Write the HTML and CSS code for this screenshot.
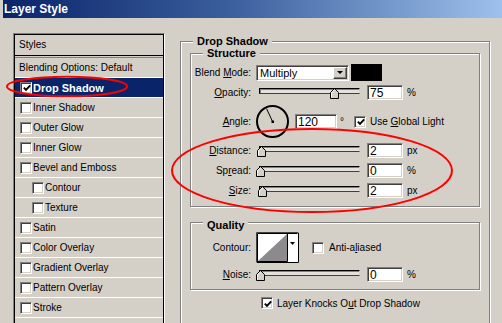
FILE: index.html
```html
<!DOCTYPE html>
<html lang="en">
<head>
    <meta charset="UTF-8">
    <title>Layer Style</title>
    <link rel="stylesheet" href="styles.css">
</head>
<body>
    <div class="titlebar">Layer Style</div>

    <div class="dialog">
        <!-- left column: list of effects -->
        <div class="styles-panel">
            <div class="styles-list">
                <div class="styles-head">Styles</div>
                <ul class="effects">
                    <li class="effect plain">Blending Options: Default</li>
                    <li class="effect selected">
                        <span class="check"><svg width="8" height="8" viewBox="0 0 8 8"><path d="M0.8 3.6 L3 5.8 L7.2 1.4" /></svg></span>Drop Shadow
                    </li>
                    <li class="effect"><span class="check"></span>Inner Shadow</li>
                    <li class="effect"><span class="check"></span>Outer Glow</li>
                    <li class="effect"><span class="check"></span>Inner Glow</li>
                    <li class="effect"><span class="check"></span>Bevel and Emboss</li>
                    <li class="effect sub"><span class="check"></span>Contour</li>
                    <li class="effect sub"><span class="check"></span>Texture</li>
                    <li class="effect"><span class="check"></span>Satin</li>
                    <li class="effect"><span class="check"></span>Color Overlay</li>
                    <li class="effect"><span class="check"></span>Gradient Overlay</li>
                    <li class="effect"><span class="check"></span>Pattern Overlay</li>
                    <li class="effect"><span class="check"></span>Stroke</li>
                </ul>
            </div>
        </div>

        <!-- right column: drop shadow settings -->
        <div class="settings">
            <div class="group main-group">
                <div class="group-title">Drop Shadow</div>

                <div class="group inner-group structure">
                    <div class="group-title">Structure</div>

                    <div class="field-row blend-row">
                        <span class="row-label">Blend <u>M</u>ode:</span>
                        <div class="select">
                            <span class="select-text">Multiply</span>
                            <span class="select-btn"><span class="arrow"></span></span>
                        </div>
                        <span class="swatch"></span>
                    </div>

                    <div class="field-row slider-row opacity-row">
                        <span class="row-label"><u>O</u>pacity:</span>
                        <div class="slider">
                            <div class="track"></div>
                            <svg class="thumb" style="left: 71px" width="9" height="11" viewBox="0 0 9 11"><path class="thumb-body" d="M0.5 10.5 L0.5 4.5 L4.5 0.5 L8.5 4.5 L8.5 10.5 Z" /><path class="thumb-light" d="M1.5 9.5 L1.5 4.9 L4.5 1.9" /></svg>
                        </div>
                        <span class="field">75</span>
                        <span class="unit">%</span>
                    </div>

                    <div class="field-row angle-row">
                        <span class="row-label"><u>A</u>ngle:</span>
                        <svg class="dial" width="33" height="33" viewBox="0 0 33 33">
                            <circle cx="16.5" cy="16.5" r="15.5" />
                            <line x1="16.5" y1="16.5" x2="10.5" y2="3.5" />
                            <rect x="15.5" y="15.5" width="2.5" height="2.5" />
                        </svg>
                        <span class="field wide">120</span>
                        <span class="degree">°</span>
                        <span class="check"><svg width="8" height="8" viewBox="0 0 8 8"><path d="M0.8 3.6 L3 5.8 L7.2 1.4" /></svg></span>
                        <span class="check-label">Use <u>G</u>lobal Light</span>
                    </div>

                    <div class="field-row slider-row">
                        <span class="row-label"><u>D</u>istance:</span>
                        <div class="slider">
                            <div class="track"></div>
                            <svg class="thumb" style="left: -2px" width="9" height="11" viewBox="0 0 9 11"><path class="thumb-body" d="M0.5 10.5 L0.5 4.5 L4.5 0.5 L8.5 4.5 L8.5 10.5 Z" /><path class="thumb-light" d="M1.5 9.5 L1.5 4.9 L4.5 1.9" /></svg>
                        </div>
                        <span class="field">2</span>
                        <span class="unit">px</span>
                    </div>

                    <div class="field-row slider-row">
                        <span class="row-label">Sp<u>r</u>ead:</span>
                        <div class="slider">
                            <div class="track"></div>
                            <svg class="thumb" style="left: -3px" width="9" height="11" viewBox="0 0 9 11"><path class="thumb-body" d="M0.5 10.5 L0.5 4.5 L4.5 0.5 L8.5 4.5 L8.5 10.5 Z" /><path class="thumb-light" d="M1.5 9.5 L1.5 4.9 L4.5 1.9" /></svg>
                        </div>
                        <span class="field">0</span>
                        <span class="unit">%</span>
                    </div>

                    <div class="field-row slider-row">
                        <span class="row-label"><u>S</u>ize:</span>
                        <div class="slider">
                            <div class="track"></div>
                            <svg class="thumb" style="left: -1px" width="9" height="11" viewBox="0 0 9 11"><path class="thumb-body" d="M0.5 10.5 L0.5 4.5 L4.5 0.5 L8.5 4.5 L8.5 10.5 Z" /><path class="thumb-light" d="M1.5 9.5 L1.5 4.9 L4.5 1.9" /></svg>
                        </div>
                        <span class="field">2</span>
                        <span class="unit">px</span>
                    </div>
                </div>

                <div class="group inner-group quality">
                    <div class="group-title">Quality</div>

                    <div class="field-row contour-row">
                        <span class="row-label">Contour:</span>
                        <svg class="contour" width="43" height="31" viewBox="0 0 43 31">
                            <rect x="0" y="0" width="43" height="31" fill="#fff" />
                            <polygon points="2,29 31,2 31,29" fill="#8c8a8c" />
                            <path d="M0.5 30.5 L0.5 0.5 L42.5 0.5" stroke="#404040" fill="none" />
                            <path d="M1.5 29.5 L1.5 1.5 L41.5 1.5" stroke="#000" fill="none" />
                            <path d="M1 29.5 L31.5 29.5 L31.5 2" stroke="#000" fill="none" />
                            <path d="M42.5 1 L42.5 30.5 L1 30.5" stroke="#000" fill="none" />
                            <polygon points="34,10 39,10 36.5,13" fill="#000" />
                        </svg>
                        <span class="check anti"></span>
                        <span class="check-label">Anti-a<u>l</u>iased</span>
                    </div>

                    <div class="field-row slider-row noise-row">
                        <span class="row-label"><u>N</u>oise:</span>
                        <div class="slider">
                            <div class="track"></div>
                            <svg class="thumb" style="left: -3px" width="9" height="11" viewBox="0 0 9 11"><path class="thumb-body" d="M0.5 10.5 L0.5 4.5 L4.5 0.5 L8.5 4.5 L8.5 10.5 Z" /><path class="thumb-light" d="M1.5 9.5 L1.5 4.9 L4.5 1.9" /></svg>
                        </div>
                        <span class="field">0</span>
                        <span class="unit">%</span>
                    </div>
                </div>

                <div class="knockout-row">
                    <span class="check"><svg width="8" height="8" viewBox="0 0 8 8"><path d="M0.8 3.6 L3 5.8 L7.2 1.4" /></svg></span>
                    <span class="check-label">Layer Knocks O<u>u</u>t Drop Shadow</span>
                </div>
            </div>
        </div>
    </div>

    <!-- red pen marks drawn over the dialog -->
    <svg class="marks" width="502" height="323" viewBox="0 0 502 323">
        <ellipse cx="67" cy="86.5" rx="60" ry="9.8" />
        <ellipse cx="312" cy="170.5" rx="140" ry="41.5" />
    </svg>
</body>
</html>
```

FILE: styles.css
```css
body {
    margin: 0;
    width: 502px;
    height: 323px;
    overflow: hidden;
    position: relative;
    background-color: #d4d0c8;
    color: #000;
    font-family: "Liberation Sans", Arial, sans-serif;
    font-size: 10px;
}
u {
    text-decoration: underline;
    text-underline-offset: 1px;
}
.titlebar {
    margin-left: 3px;
    height: 18px;
    box-sizing: border-box;
    padding: 2px 0 0 1px;
    line-height: 15px;
    background: linear-gradient(to right, #0a246a 0%, #3a5e9c 45%, #9ec0ec 100%);
    color: #fff;
    font-size: 12px;
    font-weight: bold;
}
.dialog {
    display: flex;
    align-items: flex-start;
    padding: 15px 0 0 13px;
}

/* styles list */
.styles-panel {
    width: 152px;
    height: 290px;
    box-sizing: border-box;
    border: 1px solid;
    border-color: #808080 #fff #fff #808080;
    border-bottom: 0;
    flex: none;
}
.styles-list {
    height: 100%;
    box-sizing: border-box;
    border: 1px solid #000;
    border-bottom: 0;
    overflow: hidden;
}
.styles-head {
    height: 20px;
    line-height: 19px;
    padding-left: 4px;
    border-bottom: 1px solid #000;
    margin-bottom: 1px;
}
.effects {
    list-style: none;
    margin: 0;
    padding: 0;
    border-top: 1px solid #808080;
}
.effect {
    height: 19px;
    border-bottom: 1px solid #fff;
    display: flex;
    align-items: center;
    gap: 1px;
    padding-left: 5px;
}
.effect.plain {
    padding-left: 4px;
}
.effect.sub {
    padding-left: 17px;
}
.effect.selected {
    background-color: #0a246a;
    color: #fff;
    font-weight: bold;
    font-size: 11px;
}

/* checkbox */
.check {
    width: 12px;
    height: 12px;
    box-sizing: border-box;
    border: 1px solid;
    border-color: #808080 #fff #fff #808080;
    box-shadow: inset 1px 1px #404040, inset -1px -1px #d4d0c8;
    background-color: #fff;
    display: flex;
    align-items: center;
    justify-content: center;
    flex: none;
}
.check svg {
    margin: 1px 0 0 1px;
}
.check path {
    fill: none;
    stroke: #000;
    stroke-width: 1.9;
}
.check-label {
    margin-left: 4px;
    white-space: nowrap;
}

/* group boxes */
.settings {
    width: 310px;
    margin-left: 15px;
    flex: none;
}
.group {
    border: 1px solid #808080;
    box-shadow: 1px 1px #fff, inset 1px 1px #fff;
}
.group-title {
    display: table;
    margin: -7px 0 0 12px;
    padding: 0 4px;
    background-color: #d4d0c8;
    font-size: 11px;
    font-weight: bold;
    line-height: 13px;
}
.main-group {
    margin-top: 8px;
    border-bottom: 0;
    padding-bottom: 10px;
}
.inner-group {
    margin: 0 9px;
}
.structure {
    margin-top: 5px;
    padding-bottom: 6px;
}
.quality {
    margin-top: 15px;
    padding: 3px 0 3px;
}

/* rows */
.field-row {
    display: flex;
    align-items: center;
    height: 20px;
}
.row-label {
    width: 60px;
    margin-right: 5px;
    text-align: right;
    white-space: nowrap;
    flex: none;
}
.blend-row {
    margin-top: 4px;
    height: 17px;
}
.opacity-row {
    height: 22px;
}
.angle-row {
    height: 37px;
}
.contour-row {
    height: 31px;
}
.noise-row {
    height: 23px;
}

.select {
    width: 93px;
    height: 16px;
    box-sizing: border-box;
    border: 1px solid;
    border-color: #808080 #fff #fff #808080;
    box-shadow: inset 1px 1px #404040, inset -1px -1px #d4d0c8;
    background-color: #fff;
    display: flex;
    align-items: center;
    justify-content: space-between;
    padding: 0 1px 0 3px;
    font-size: 11px;
}
.select-btn {
    width: 14px;
    height: 12px;
    box-sizing: border-box;
    border: 1px solid;
    border-color: #fff #404040 #404040 #fff;
    box-shadow: inset -1px -1px #808080;
    background-color: #d4d0c8;
    display: flex;
    align-items: center;
    justify-content: center;
}
.arrow {
    width: 0;
    height: 0;
    border-left: 3px solid transparent;
    border-right: 3px solid transparent;
    border-top: 3px solid #000;
}
.swatch {
    width: 31px;
    height: 17px;
    margin-left: 2px;
    background-color: #000;
}

.slider {
    position: relative;
    width: 101px;
    height: 11px;
    margin: 2px 7px 0 3px;
    flex: none;
}
.track {
    height: 6px;
    box-sizing: border-box;
    border: 1px solid;
    border-color: #000 #d4d0c8 #404040 #000;
    box-shadow: inset 1px 1px #808080;
    background-color: #e4e1dc;
}
.thumb {
    position: absolute;
    top: 0;
}
.thumb-body {
    fill: #d4d0c8;
    stroke: #000;
}
.thumb-light {
    fill: none;
    stroke: #fff;
}

.field {
    width: 36px;
    height: 15px;
    box-sizing: border-box;
    border: 1px solid;
    border-color: #808080 #fff #fff #808080;
    box-shadow: inset 1px 1px #404040, inset -1px -1px #d4d0c8;
    background-color: #fff;
    padding: 1px 0 0 2px;
    font-size: 12px;
    line-height: 12px;
    flex: none;
}
.field.wide {
    width: 42px;
}
.unit {
    margin-left: 4px;
}
.degree {
    margin: 0 10px 0 3px;
}

.dial {
    margin-right: 6px;
    flex: none;
}
.dial circle {
    fill: none;
    stroke: #000;
    stroke-width: 2;
}
.dial line {
    stroke: #000;
    stroke-width: 1;
}
.contour {
    flex: none;
}
.anti {
    margin-left: 13px;
}
.anti + .check-label {
    margin-left: 5px;
}

.knockout-row {
    display: flex;
    align-items: center;
    height: 20px;
    margin-top: 3px;
    padding-left: 80px;
}

/* red annotation marks */
.marks {
    position: absolute;
    top: 0;
    left: 0;
    pointer-events: none;
}
.marks ellipse {
    fill: none;
    stroke: #ff0000;
    stroke-width: 2;
}
```
